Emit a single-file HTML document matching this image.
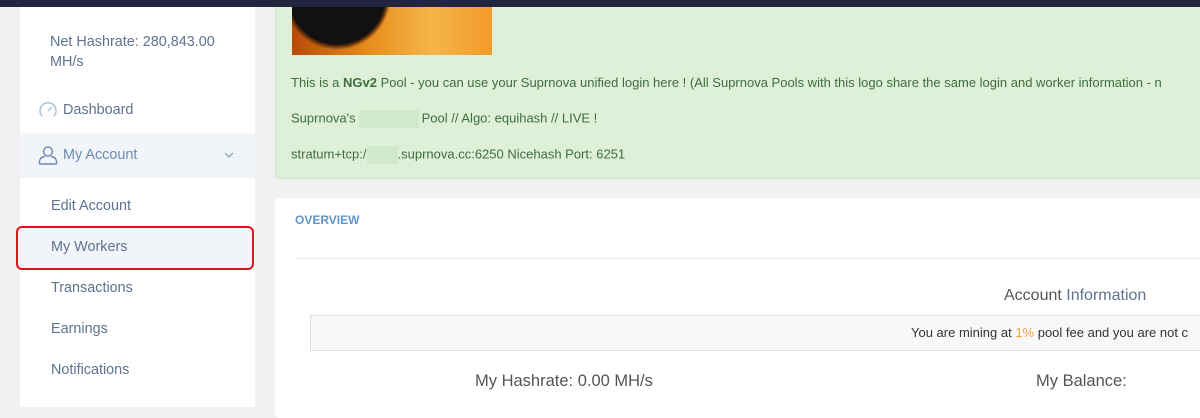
<!DOCTYPE html><html><head><style>
body{margin:0;width:1200px;height:404px;overflow:hidden;background:#f1f1f1;font-family:"Liberation Sans",sans-serif;position:relative}
.top{position:absolute;left:0;top:0;width:1200px;height:7px;background:#23243f;z-index:5}
.side{position:absolute;left:20px;top:7px;width:235px;height:400px;background:#fff}
.s{position:absolute;color:#5f7391;font-size:14.4px}
.green{position:absolute;left:275px;top:-5px;width:940px;height:182px;background:#dff0d8;border:1px solid #cfe3c6;border-radius:4px;color:#3c6e3c;font-size:13px}
.img{position:absolute;left:16px;top:5px;width:200px;height:54px;background:radial-gradient(circle at 45px -5px,#111 0 48px,#5a2a08 50px,transparent 54px),linear-gradient(90deg,#b84a08,#e8901e 40%,#f5b54a 70%,#f29a2a)}
.g{position:absolute;left:15px;white-space:nowrap}
.blk{display:inline-block;background:#d0e8cc;height:18px;vertical-align:middle}
.card{position:absolute;left:275px;top:198px;width:940px;height:220px;background:#fff;border-radius:4px}
.n{color:#555;position:absolute;white-space:nowrap}
</style></head><body>
<div class="top"></div>
<div class="side">
<div class="s" style="left:30px;top:25px;line-height:20px">Net Hashrate: 280,843.00<br>MH/s</div>
<svg style="position:absolute;left:18px;top:93px" width="20" height="20" viewBox="0 0 20 20"><path d="M4 16A8 8 0 1 1 16 16" fill="none" stroke="#a9c0d6" stroke-width="1.5"/><path d="M10 11L14 7" stroke="#a9c0d6" stroke-width="1.5"/></svg>
<div class="s" style="left:43px;top:95px">Dashboard</div>
<div style="position:absolute;left:0;top:126px;width:235px;height:45px;background:#f1f4f8"></div>
<svg style="position:absolute;left:18px;top:138px" width="20" height="20" viewBox="0 0 20 20"><circle cx="10" cy="6.5" r="4.5" fill="none" stroke="#6d8bb0" stroke-width="1.4"/><path d="M1.5 19V16.5Q2 12 7 11.5M18.5 19V16.5Q18 12 13 11.5M1.5 19H18.5" fill="none" stroke="#6d8bb0" stroke-width="1.4"/></svg>
<div class="s" style="left:43px;top:140px;color:#6d8bb0">My Account</div>
<svg style="position:absolute;left:204px;top:145px" width="10" height="6"><path d="M1 1L5 5L9 1" fill="none" stroke="#7f9ab8" stroke-width="1.2"/></svg>
<div class="s" style="left:31px;top:191px">Edit Account</div>
<div style="position:absolute;left:-4px;top:219px;width:234px;height:40px;border:2px solid #e0131b;border-radius:6px;background:#f1f4f8"></div>
<div class="s" style="left:31px;top:232px">My Workers</div>
<div class="s" style="left:31px;top:273px">Transactions</div>
<div class="s" style="left:31px;top:314px">Earnings</div>
<div class="s" style="left:31px;top:355px">Notifications</div>
</div>
<div class="green">
<div class="img"></div>
<div class="g" style="top:79px">This is a <b>NGv2</b> Pool - you can use your Suprnova unified login here ! (All Suprnova Pools with this logo share the same login and worker information - n</div>
<div class="g" style="top:114px">Suprnova's<span class="blk" style="width:60px;margin:0 3px"></span>Pool // Algo: equihash // LIVE !</div>
<div class="g" style="top:150px">stratum+tcp:/<span class="blk" style="width:31px"></span>.suprnova.cc:6250 Nicehash Port: 6251</div>
</div>
<div class="card">
<div style="position:absolute;left:20px;top:15px;font-size:12px;font-weight:bold;color:#5f95c9">OVERVIEW</div>
<div style="position:absolute;left:20px;top:60px;width:920px;height:1px;background:#e8e8e8"></div>
<div class="n" style="left:729px;top:89px;font-size:16px">Account <span style="color:#5f7391">Information</span></div>
<div style="position:absolute;left:35px;top:117px;width:905px;height:34px;background:#f8f8f8;border:1px solid #ddd"></div>
<div class="n" style="left:636px;top:127px;font-size:13px;color:#333">You are mining at <span style="color:#f0a040">1%</span> pool fee and you are not c</div>
<div class="n" style="left:200px;top:174px;font-size:16.5px">My Hashrate: 0.00 MH/s</div>
<div class="n" style="left:761px;top:174px;font-size:16.5px">My Balance:</div>
</div>
</body></html>
